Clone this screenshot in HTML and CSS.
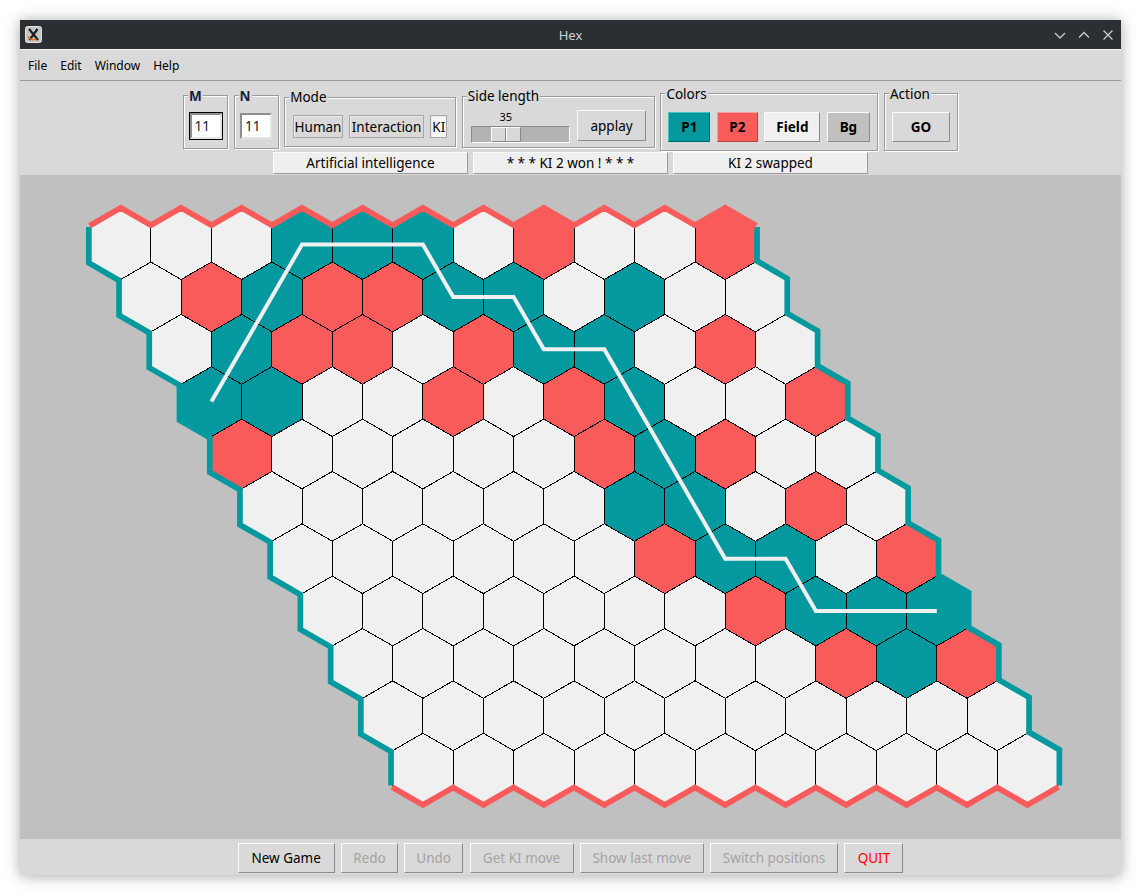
FILE: index.html
```html
<!DOCTYPE html>
<html lang="en">
<head>
    <meta charset="UTF-8">
    <title>Hex</title>
    <link rel="stylesheet" href="styles.css">
</head>
<body>
    <div class="window">
        <div class="titlebar">
            <svg class="app-icon" width="17" height="17" viewBox="0 0 17 17">
                <rect x="0.5" y="0.5" width="16" height="16" rx="2" fill="#c6c6c6" stroke="#e4e4e4"/>
                <path d="M4 3 L13 14 M12.5 3 L4.5 14" stroke="#1e1e1e" stroke-width="2.2" fill="none"/>
                <path d="M3 10.5 Q5.5 15 11.5 13.2" stroke="#e8701c" stroke-width="1.4" fill="none"/>
            </svg>
            <span class="title">Hex</span>
            <div class="wm-buttons">
                <svg width="24" height="16" viewBox="0 0 24 16"><polyline points="7,6 12,11 17,6"/></svg>
                <svg width="24" height="16" viewBox="0 0 24 16"><polyline points="7,10.5 12,5.5 17,10.5"/></svg>
                <svg width="24" height="16" viewBox="0 0 24 16"><path d="M7.5 3.5 L16.5 12.5 M16.5 3.5 L7.5 12.5"/></svg>
            </div>
        </div>

        <div class="menubar">
            <span>File</span>
            <span>Edit</span>
            <span>Window</span>
            <span>Help</span>
        </div>

        <div class="toolbar">
            <div class="tool-row">
                <fieldset class="group g-m">
                    <legend class="strong">M</legend>
                    <div class="group-body body-mn"><div class="entry focus">11</div></div>
                </fieldset>
                <fieldset class="group g-n">
                    <legend class="strong">N</legend>
                    <div class="group-body body-mn"><div class="entry">11</div></div>
                </fieldset>
                <fieldset class="group g-mode">
                    <legend>Mode</legend>
                    <div class="group-body body-mode">
                        <div class="btn mode-btn w-human">Human</div>
                        <div class="btn mode-btn w-inter">Interaction</div>
                        <div class="btn mode-btn w-ki selected">KI</div>
                    </div>
                </fieldset>
                <fieldset class="group g-side">
                    <legend>Side length</legend>
                    <div class="group-body body-side">
                        <div class="scale">
                            <div class="scale-value">35</div>
                            <div class="trough">
                                <div class="handle"><span></span><span></span></div>
                            </div>
                        </div>
                        <div class="btn applay">applay</div>
                    </div>
                </fieldset>
                <fieldset class="group g-colors">
                    <legend>Colors</legend>
                    <div class="group-body body-colors">
                        <div class="btn color-btn c-p1">P1</div>
                        <div class="btn color-btn c-p2">P2</div>
                        <div class="btn color-btn c-field">Field</div>
                        <div class="btn color-btn c-bg">Bg</div>
                    </div>
                </fieldset>
                <fieldset class="group g-action">
                    <legend>Action</legend>
                    <div class="group-body body-action">
                        <div class="btn color-btn c-go">GO</div>
                    </div>
                </fieldset>
            </div>
            <div class="status-row">
                <div class="status">Artificial intelligence</div>
                <div class="status">* * * KI 2 won ! * * *</div>
                <div class="status">KI 2 swapped</div>
            </div>
        </div>

        <div class="board">
            <svg id="board" width="1101" height="664" viewBox="0 0 1101 664"></svg>
        </div>

        <div class="bottom-bar">
            <div class="btn bar-btn w-new">New Game</div>
            <div class="btn bar-btn disabled w-redo">Redo</div>
            <div class="btn bar-btn disabled w-undo">Undo</div>
            <div class="btn bar-btn disabled w-ki">Get KI move</div>
            <div class="btn bar-btn disabled w-show">Show last move</div>
            <div class="btn bar-btn disabled w-switch">Switch positions</div>
            <div class="btn bar-btn quit w-quit">QUIT</div>
        </div>
    </div>

    <script>
        document.addEventListener('DOMContentLoaded', () => {
            const svg = document.getElementById('board');
            const SIDE = 34.9;
            const W = SIDE * Math.sqrt(3);
            const DY = SIDE * 1.5;
            const X0 = 100.7, Y0 = 69.6;
            const N = 11;
            const TEAL = '#03999e', RED = '#f95b5b';
            const fill = { '.': '#f0f0f0', 'T': TEAL, 'R': RED };

            // T = player 1, R = player 2, . = empty field
            const board = [
                '...TTT.R..R',
                '.RTRRTT.T..',
                '.TRR.RTT.R.',
                'TT..R.RT..R',
                'R.....RTR..',
                '......TT.R.',
                '......RTT.R',
                '.......RTTT',
                '........RTR',
                '...........',
                '...........'
            ];
            const winPath = [[3, 0], [0, 3], [0, 5], [1, 5], [1, 6], [2, 6], [2, 7], [6, 7], [6, 8], [7, 8], [7, 10]];

            function center(r, c) {
                return [X0 + W / 2 * r + W * c, Y0 + DY * r];
            }

            function corners(r, c) {
                const [x, y] = center(r, c);
                return {
                    t: [x, y - SIDE], ur: [x + W / 2, y - SIDE / 2], lr: [x + W / 2, y + SIDE / 2],
                    b: [x, y + SIDE], ll: [x - W / 2, y + SIDE / 2], ul: [x - W / 2, y - SIDE / 2]
                };
            }

            const pts = list => list.map(p => p[0].toFixed(1) + ',' + p[1].toFixed(1)).join(' ');

            let hexes = '';
            for (let r = 0; r < N; r++) {
                for (let c = 0; c < N; c++) {
                    const k = corners(r, c);
                    hexes += `<polygon points="${pts([k.t, k.ur, k.lr, k.b, k.ll, k.ul])}" fill="${fill[board[r][c]]}"/>`;
                }
            }

            const top = [], bottom = [], left = [], right = [];
            for (let i = 0; i < N; i++) {
                const t = corners(0, i), b = corners(N - 1, i);
                const l = corners(i, 0), rr = corners(i, N - 1);
                top.push(t.ul, t.t);
                bottom.push(b.ll, b.b);
                left.push(l.ul, l.ll);
                right.push(rr.ur, rr.lr);
            }
            top.push(corners(0, N - 1).ur);
            bottom.push(corners(N - 1, N - 1).lr);

            const outline = top.concat(right, bottom.slice().reverse(), left.slice().reverse());

            svg.innerHTML = `
                <defs>
                    <mask id="outside" maskUnits="userSpaceOnUse" x="0" y="0" width="1101" height="664">
                        <rect width="1101" height="664" fill="#fff"/>
                        <polygon points="${pts(outline)}" fill="#000" stroke="#fff" stroke-width="2.4"/>
                    </mask>
                </defs>
                <g stroke="#000" stroke-width="1" shape-rendering="crispEdges">${hexes}</g>
                <g mask="url(#outside)" fill="none" stroke-width="9">
                    <polyline points="${pts(left)}" stroke="${TEAL}"/>
                    <polyline points="${pts(right)}" stroke="${TEAL}"/>
                    <polyline points="${pts(top)}" stroke="${RED}"/>
                    <polyline points="${pts(bottom)}" stroke="${RED}"/>
                </g>
                <polyline points="${pts(winPath.map(p => center(p[0], p[1])))}" fill="none" stroke="#f0f0f0" stroke-width="4"/>
            `;
        });
    </script>
</body>
</html>
```

FILE: styles.css
```css
body {
    margin: 0;
    padding: 20px;
    background-color: #ffffff;
    font-family: "Noto Sans", "DejaVu Sans", sans-serif;
    color: #000000;
}

.window {
    width: 1101px;
    height: 855px;
    display: flex;
    flex-direction: column;
    background-color: #d9d9d9;
    box-shadow: 0 1px 14px rgba(0, 0, 0, 0.35);
}

/* window manager title bar */
.titlebar {
    height: 29px;
    flex: none;
    display: grid;
    grid-template-columns: 1fr auto 1fr;
    align-items: center;
    background-color: #2b2e33;
    color: #cfd2d5;
    font-size: 13px;
}

.app-icon {
    margin-left: 5px;
    display: block;
}

.wm-buttons {
    justify-self: end;
    display: flex;
    padding-right: 1px;
}

.wm-buttons svg {
    display: block;
    fill: none;
    stroke: #c6cacf;
    stroke-width: 1.4;
}

.menubar {
    height: 32px;
    flex: none;
    box-sizing: border-box;
    display: flex;
    align-items: center;
    padding-left: 1.5px;
    border-top: 1px solid #f4f4f4;
    border-bottom: 1px solid #9d9d9d;
    font-size: 12px;
}

.menubar span {
    padding: 0 6.5px;
}

/* top controls */
.toolbar {
    height: 94px;
    flex: none;
    box-sizing: border-box;
    padding-top: 3px;
    padding-bottom: 1px;
}

.tool-row {
    height: 68px;
    display: flex;
    justify-content: center;
    align-items: center;
    gap: 5.6px;
}

.group {
    margin: 0;
    padding: 0;
    min-width: 0;
    box-sizing: border-box;
    border: 1px solid #9a9a9a;
    box-shadow: 1px 1px 0 #ffffff, inset 1px 1px 0 #ffffff;
}

.group legend {
    margin-left: 4px;
    padding: 0 1px;
    font-size: 13.5px;
    line-height: 16px;
    background-color: #d9d9d9;
}

.group legend.strong {
    font-weight: bold;
    color: #17233f;
}

.g-m, .g-n { width: 45px; }
.g-mode { width: 172px; }
.g-side { width: 193px; }
.g-colors { width: 218px; }
.g-action { width: 74px; }

.group-body {
    display: flex;
}

.body-mn { padding: 8px 0 8px 4.5px; }
.body-mode { padding: 10px 8px 8px; gap: 6.5px; }
.body-side { padding: 5px 8px 4px; gap: 7.3px; align-items: flex-start; }
.body-colors { padding: 10px 7px 8px; gap: 6.5px; }
.body-action { padding: 10px 7.3px 8px; }

.entry {
    width: 32px;
    height: 26px;
    margin: 1px;
    box-sizing: border-box;
    padding-left: 3px;
    display: flex;
    align-items: center;
    background-color: #ffffff;
    border: 2px solid;
    border-color: #8e8e8e #e4e4e4 #e4e4e4 #8e8e8e;
    font-size: 13.5px;
    color: #101a33;
}

.entry.focus {
    outline: 1px solid #000000;
}

.btn {
    box-sizing: border-box;
    display: flex;
    align-items: center;
    justify-content: center;
    white-space: nowrap;
    background-color: #d9d9d9;
    border: 1px solid;
    border-color: #fbfbfb #8c8c8c #8c8c8c #fbfbfb;
    font-size: 13.5px;
}

.mode-btn {
    height: 23px;
    border-color: #a6a6a6;
    box-shadow: inset 1px 1px 0 #ececec;
}

.w-human { width: 50px; }
.w-inter { width: 75px; }
.w-ki { width: 17px; }

.mode-btn.selected {
    background-color: #f7f7f7;
}

.scale {
    width: 100px;
    display: flex;
    flex-direction: column;
}

.scale-value {
    width: 30px;
    height: 15px;
    margin-left: 20px;
    line-height: 15px;
    text-align: center;
    font-size: 11px;
}

.trough {
    height: 17px;
    margin-top: 2px;
    box-sizing: border-box;
    padding-left: 19px;
    background-color: #b3b3b3;
    border: 1px solid;
    border-color: #8a8a8a #ffffff #ffffff #8a8a8a;
}

.handle {
    width: 30px;
    height: 15px;
    box-sizing: border-box;
    display: flex;
    background-color: #d9d9d9;
    border: 1px solid;
    border-color: #ffffff #8a8a8a #8a8a8a #ffffff;
}

.handle span {
    flex: 1;
}

.handle span:first-child {
    border-right: 1px solid #8a8a8a;
}

.handle span:last-child {
    border-left: 1px solid #ffffff;
}

.applay {
    width: 69px;
    height: 31px;
    margin-top: 1px;
}

.color-btn {
    height: 30px;
    font-weight: bold;
}

.c-p1 {
    width: 42px;
    background-color: #03999e;
    border-color: #4cbcbf #02696c #02696c #4cbcbf;
}

.c-p2 {
    width: 41px;
    background-color: #f95b5b;
    border-color: #fb9b9b #b64141 #b64141 #fb9b9b;
}

.c-field {
    width: 56px;
    background-color: #f0f0f0;
}

.c-bg {
    width: 43px;
    background-color: #c0c0c0;
}

.c-go {
    width: 58px;
}

.status-row {
    height: 22px;
    display: flex;
    justify-content: center;
    gap: 5px;
}

.status {
    width: 195px;
    height: 22px;
    box-sizing: border-box;
    display: flex;
    align-items: center;
    justify-content: center;
    background-color: #efefef;
    border: 1px solid;
    border-color: #fbfbfb #9a9a9a #9a9a9a #fbfbfb;
    font-size: 13.5px;
}

/* playing field */
.board {
    height: 664px;
    flex: none;
    background-color: #c0c0c0;
}

.board svg {
    display: block;
}

.bottom-bar {
    height: 36px;
    flex: none;
    box-sizing: border-box;
    padding-top: 4px;
    display: flex;
    justify-content: center;
    align-items: flex-start;
    gap: 6.3px;
}

.bar-btn {
    height: 30px;
}

.bar-btn.disabled {
    color: #a3a3a3;
}

.bar-btn.quit {
    color: #ff0000;
}

.w-new { width: 97px; }
.w-redo { width: 57px; }
.w-undo { width: 59px; }
.bar-btn.w-ki { width: 104px; }
.w-show { width: 124px; }
.w-switch { width: 128px; }
.w-quit { width: 59px; }
```
